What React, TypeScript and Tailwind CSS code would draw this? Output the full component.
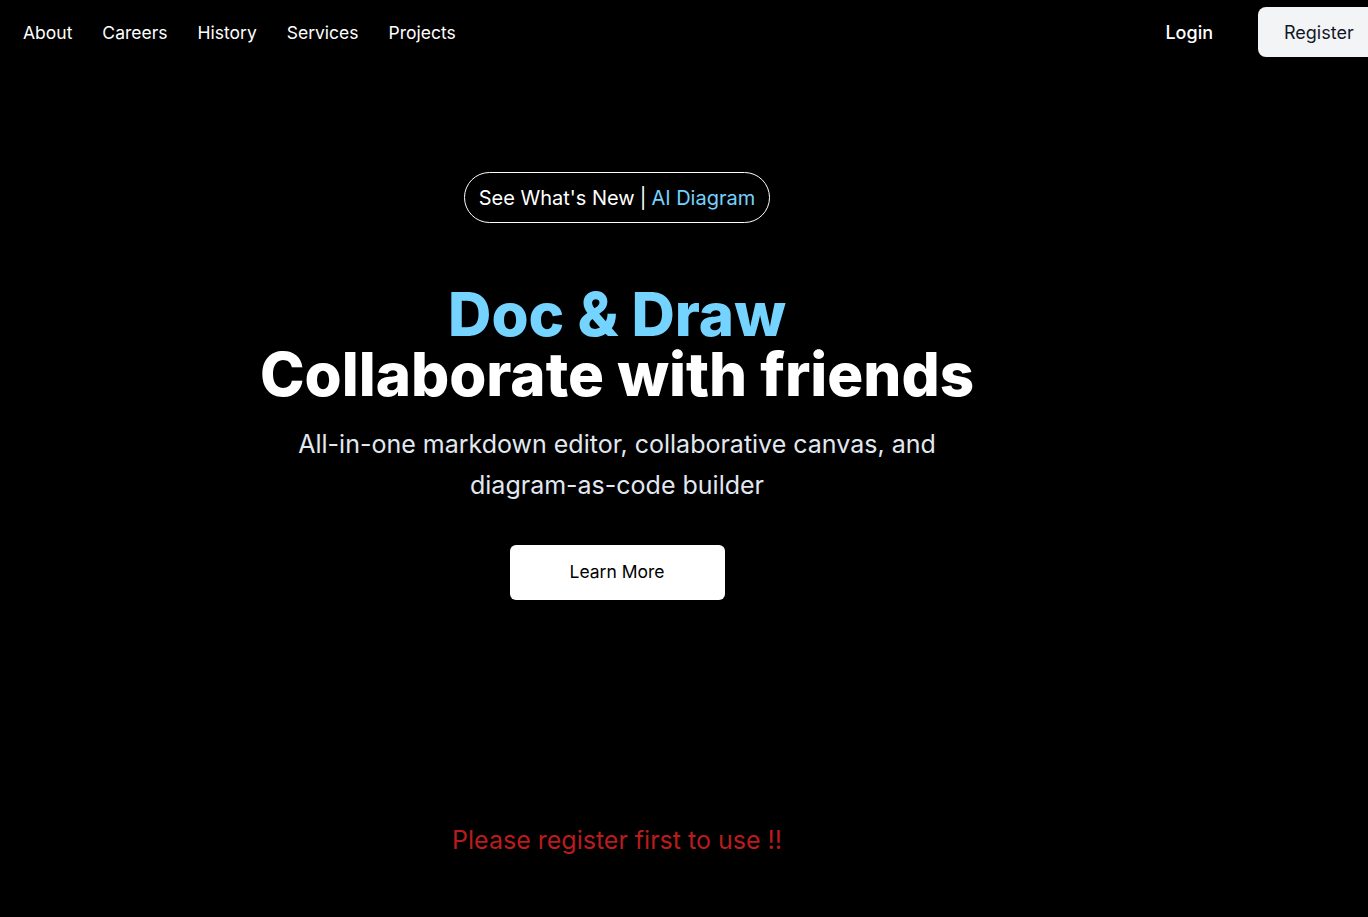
import React from 'react';

const navLinks = ['About', 'Careers', 'History', 'Services', 'Projects'];

export default function App() {
  return (
    <div className="min-h-screen w-full overflow-hidden bg-black font-['Inter',sans-serif] text-white">
      {/* Top bar */}
      <nav className="flex h-[64px] items-center justify-between pl-[23px]">
        <ul className="mt-[3px] flex items-center gap-[30px] text-[17.5px]">
          {navLinks.map((link) => (
            <li key={link}>
              <a href="#" className="hover:text-sky-300">
                {link}
              </a>
            </li>
          ))}
        </ul>
        <div className="flex items-center">
          <button className="mt-[2px] mr-[45px] text-lg font-medium">Login</button>
          <button className="-mr-[10px] flex h-[50px] w-[120px] items-center rounded-lg bg-gray-100 pt-[2px] pl-[26px] text-lg text-gray-900">
            Register
          </button>
        </div>
      </nav>

      {/* Hero */}
      <main className="flex w-[1234px] flex-col items-center pt-[108px]">
        <div className="flex h-[51px] items-center rounded-full border border-white px-[14px] text-xl">
          <span>See What's New</span>
          <span className="mx-[5px]">|</span>
          <span className="text-sky-300">AI Diagram</span>
        </div>

        <h1 className="mt-[61px] text-center text-6xl leading-[60px] font-extrabold">
          <span className="block text-sky-300">Doc &amp; Draw</span>
          <span className="block">Collaborate with friends</span>
        </h1>

        <p className="mt-[20px] max-w-[680px] text-center text-[25px] leading-[41px] text-slate-200">
          All-in-one markdown editor, collaborative canvas, and diagram-as-code builder
        </p>

        <button className="mt-[39px] h-[55px] w-[215px] rounded-md bg-white text-[17.5px] text-black">
          Learn More
        </button>

        <p className="mt-[222px] text-[25px] text-[#b91c1c]">Please register first to use !!</p>
      </main>
    </div>
  );
}
